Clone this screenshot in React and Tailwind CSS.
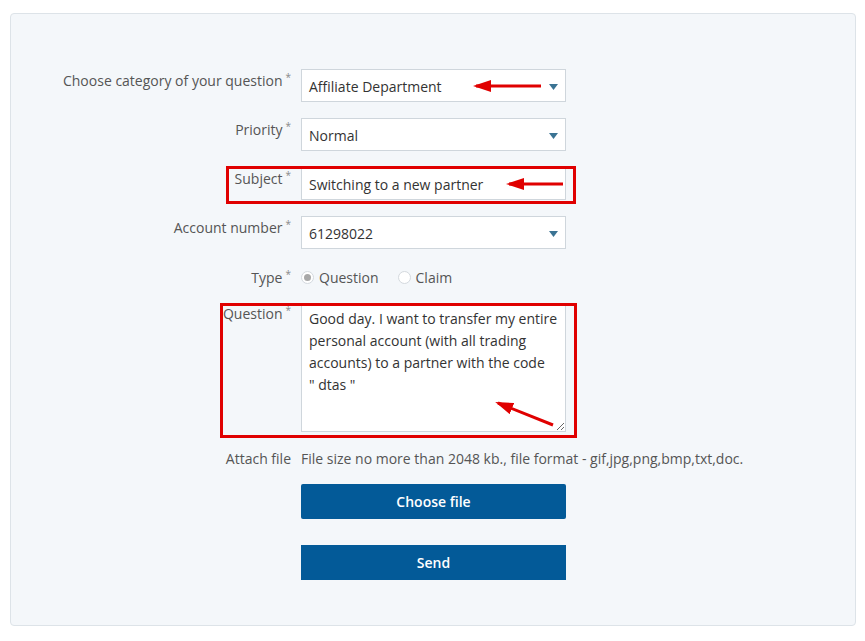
import React from 'react';

const font = { fontFamily: '"Open Sans", "Noto Sans", sans-serif' };

function Caret() {
    return (
        <svg className="absolute right-[7px] top-[14px]" width="9" height="6" viewBox="0 0 9 6">
            <path d="M0 0 L9 0 L4.5 6 Z" fill="#3a7393" />
        </svg>
    );
}

function Label({ children, className = '' }) {
    return (
        <div className={`w-[290px] shrink-0 pr-[10px] text-right text-[14px] text-[#555] ${className}`}>
            {children}
            <span className="ml-[3px] text-[10px] align-top text-[#888]">*</span>
        </div>
    );
}

function SelectBox({ value }) {
    return (
        <div className="relative h-[33px] w-[265px] border border-[#cfd6dc] bg-white pl-[7px] text-[14px] leading-[33px] text-[#333]">
            {value}
            <Caret />
        </div>
    );
}

function Radio({ checked, label }) {
    return (
        <div className="flex items-center gap-[5px]">
            <span className="flex h-[13px] w-[13px] items-center justify-center rounded-full border border-[#d4d9de] bg-white">
                {checked && <span className="h-[7px] w-[7px] rounded-full bg-[#a8a8a8]" />}
            </span>
            <span className="text-[14px] text-[#555]">{label}</span>
        </div>
    );
}

function Arrow({ x1, y1, x2, y2 }) {
    return (
        <svg className="pointer-events-none absolute left-0 top-0" width="865" height="641">
            <defs>
                <marker id={`h${x1}${y1}`} markerWidth="6" markerHeight="4" refX="5" refY="2" orient="auto">
                    <path d="M0 0 L6 2 L0 4 Z" fill="#e00000" />
                </marker>
            </defs>
            <line x1={x1} y1={y1} x2={x2} y2={y2} stroke="#e00000" strokeWidth="3" markerEnd={`url(#h${x1}${y1})`} />
        </svg>
    );
}

export default function App() {
    return (
        <div className="relative h-[641px] w-[865px] overflow-hidden bg-white" style={font}>
            <div className="ml-[10px] mt-[13px] h-[613px] w-[846px] rounded-[4px] border border-[#dde3e8] bg-[#f4f7fa] pt-[55px]">
                {/* Category */}
                <div className="flex">
                    <Label className="pt-[1px]">Choose category of your question</Label>
                    <SelectBox value="Affiliate Department" />
                </div>

                {/* Priority */}
                <div className="mt-[16px] flex">
                    <Label className="pt-[1px]">Priority</Label>
                    <SelectBox value="Normal" />
                </div>

                {/* Subject */}
                <div className="mt-[16px] flex">
                    <Label className="pt-[1px]">Subject</Label>
                    <div className="h-[33px] w-[265px] border border-[#cfd6dc] bg-white pl-[7px] text-[14px] leading-[33px] text-[#333]">
                        Switching to a new partner
                    </div>
                </div>

                {/* Account */}
                <div className="mt-[16px] flex">
                    <Label className="pt-[1px]">Account number</Label>
                    <SelectBox value="61298022" />
                </div>

                {/* Type */}
                <div className="mt-[16px] flex h-[24px] items-center">
                    <Label>Type</Label>
                    <div className="flex items-center gap-[19px]">
                        <Radio checked label="Question" />
                        <Radio label="Claim" />
                    </div>
                </div>

                {/* Question */}
                <div className="mt-[16px] flex">
                    <Label className="-mt-[2px]">Question</Label>
                    <textarea
                        readOnly
                        className="h-[127px] w-[265px] resize border border-[#cfd6dc] bg-white px-[7px] pt-[2px] text-[14px] leading-[22px] text-[#333] outline-none"
                        style={font}
                        defaultValue={'Good day. I want to transfer my entire\npersonal account (with all trading\naccounts) to a partner with the code\n" dtas "'}
                    />
                </div>

                {/* Attach */}
                <div className="mt-[16px] flex text-[14px] text-[#555]">
                    <div className="w-[290px] shrink-0 pr-[10px] text-right">Attach file</div>
                    <div>File size no more than 2048 kb., file format - gif,jpg,png,bmp,txt,doc.</div>
                </div>

                <div className="ml-[290px] mt-[15px] flex flex-col gap-[26px]">
                    <button className="h-[35px] w-[265px] rounded-[2px] bg-[#035a98] text-[14px] font-semibold text-white">
                        Choose file
                    </button>
                    <button className="h-[35px] w-[265px] bg-[#035a98] text-[14px] font-semibold text-white">
                        Send
                    </button>
                </div>
            </div>

            {/* annotations */}
            <div className="pointer-events-none absolute left-[226px] top-[166px] h-[38px] w-[350px] border-[3px] border-[#e00000]" />
            <div className="pointer-events-none absolute left-[220px] top-[303px] h-[135px] w-[357px] border-[3px] border-[#e00000]" />
            <Arrow x1={541} y1={86} x2={476} y2={86} />
            <Arrow x1={563} y1={184} x2={509} y2={184} />
            <Arrow x1={553} y1={425} x2={498} y2={403} />
        </div>
    );
}
